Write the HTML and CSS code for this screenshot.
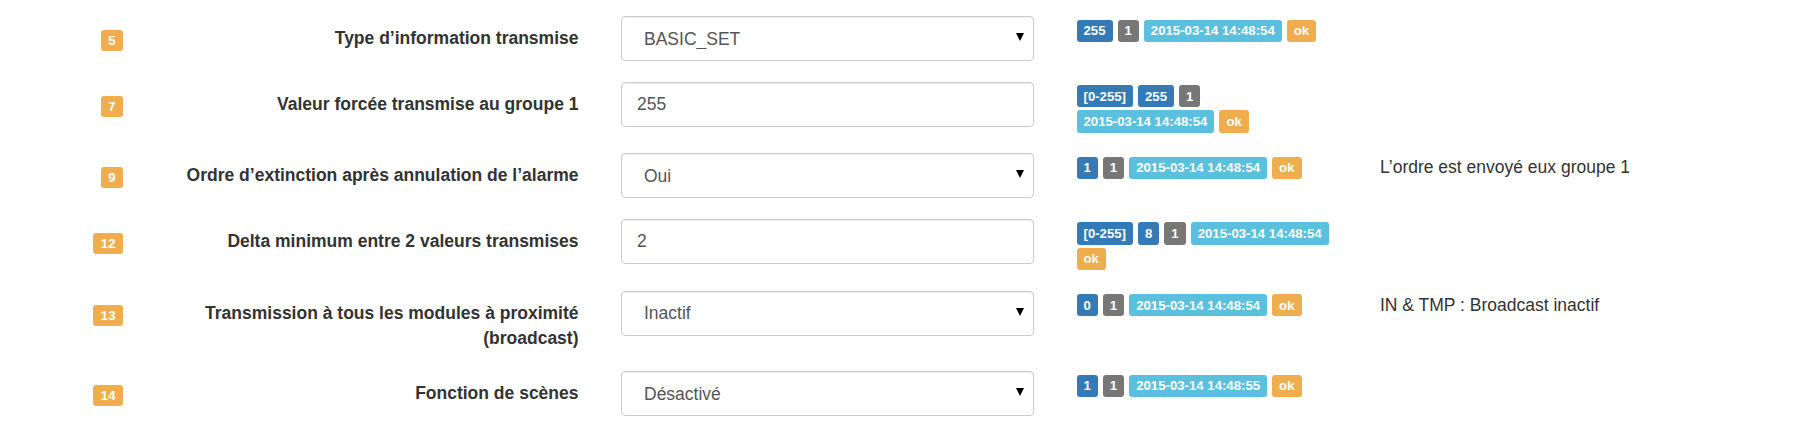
FILE: index.html
```html
<!DOCTYPE html>
<html lang="fr">
<head>
<meta charset="utf-8">
<title>Paramètres</title>
<link rel="stylesheet" href="styles.css">
</head>
<body>
<div class="form">
  <div class="row">
    <div class="num"><span class="badge warning">5</span></div>
    <div class="label">Type d’information transmise</div>
    <div class="field"><span class="select-wrap"><select class="control"><option>BASIC_SET</option></select></span></div>
    <div class="status">
      <span class="badge primary">255</span><span class="badge default">1</span><span class="badge info">2015-03-14 14:48:54</span><span class="badge warning">ok</span>
    </div>
    <div class="comment"></div>
  </div>

  <div class="row">
    <div class="num"><span class="badge warning">7</span></div>
    <div class="label">Valeur forcée transmise au groupe 1</div>
    <div class="field"><input class="control text" type="text" value="255"></div>
    <div class="status">
      <span class="badge primary">[0-255]</span><span class="badge primary">255</span><span class="badge default">1</span><span class="badge info">2015-03-14 14:48:54</span><span class="badge warning">ok</span>
    </div>
    <div class="comment"></div>
  </div>

  <div class="row">
    <div class="num"><span class="badge warning">9</span></div>
    <div class="label">Ordre d’extinction après annulation de l’alarme</div>
    <div class="field"><span class="select-wrap"><select class="control"><option>Oui</option></select></span></div>
    <div class="status">
      <span class="badge primary">1</span><span class="badge default">1</span><span class="badge info">2015-03-14 14:48:54</span><span class="badge warning">ok</span>
    </div>
    <div class="comment">L’ordre est envoyé eux groupe 1</div>
  </div>

  <div class="row">
    <div class="num"><span class="badge warning">12</span></div>
    <div class="label">Delta minimum entre 2 valeurs transmises</div>
    <div class="field"><input class="control text" type="text" value="2"></div>
    <div class="status">
      <span class="badge primary">[0-255]</span><span class="badge primary">8</span><span class="badge default">1</span><span class="badge info">2015-03-14 14:48:54</span><span class="badge warning">ok</span>
    </div>
    <div class="comment"></div>
  </div>

  <div class="row">
    <div class="num"><span class="badge warning">13</span></div>
    <div class="label">Transmission à tous les modules à proximité (broadcast)</div>
    <div class="field"><span class="select-wrap"><select class="control"><option>Inactif</option></select></span></div>
    <div class="status">
      <span class="badge primary">0</span><span class="badge default">1</span><span class="badge info">2015-03-14 14:48:54</span><span class="badge warning">ok</span>
    </div>
    <div class="comment">IN &amp; TMP : Broadcast inactif</div>
  </div>

  <div class="row">
    <div class="num"><span class="badge warning">14</span></div>
    <div class="label">Fonction de scènes</div>
    <div class="field"><span class="select-wrap"><select class="control"><option>Désactivé</option></select></span></div>
    <div class="status">
      <span class="badge primary">1</span><span class="badge default">1</span><span class="badge info">2015-03-14 14:48:55</span><span class="badge warning">ok</span>
    </div>
    <div class="comment"></div>
  </div>
</div>
</body>
</html>
```

FILE: styles.css
```css
body {
  margin: 0;
  background: #fff;
  color: #333;
  font-family: "Liberation Sans", Arial, sans-serif;
  font-size: 17.5px;
}

.form {
  padding-top: 16px;
}

.row {
  display: grid;
  grid-template-columns: 123px 455.5px 455.5px 303.5px 1fr;
  align-items: start;
  margin-bottom: 20.5px;
}

.num {
  justify-self: end;
  margin-top: 14px;
  display: flex;
}

.label {
  padding-left: 25.5px;
  padding-top: 10px;
  text-align: right;
  font-weight: bold;
  line-height: 25px;
  color: #333;
}

.field {
  padding-left: 42.5px;
}

.control {
  display: block;
  width: 100%;
  height: 45px;
  box-sizing: border-box;
  margin: 0;
  border: 1px solid #ccc;
  border-radius: 4px;
  background: #fff;
  box-shadow: inset 0 1px 1px rgba(0, 0, 0, 0.075);
  font-family: "Liberation Sans", Arial, sans-serif;
  font-size: 17.5px;
  color: #555;
  padding: 0 15px;
  outline: none;
}

select.control {
  -webkit-appearance: none;
  appearance: none;
  padding-left: 22px;
}

.select-wrap {
  position: relative;
  display: block;
}

.select-wrap::after {
  content: "";
  position: absolute;
  right: 10px;
  top: 17px;
  border-left: 4.5px solid transparent;
  border-right: 4.5px solid transparent;
  border-top: 8px solid #000;
  pointer-events: none;
}

.status {
  padding-left: 42.5px;
  padding-top: 3.5px;
  display: flex;
  flex-wrap: wrap;
  align-content: flex-start;
  gap: 3px 5px;
}

.badge {
  display: inline-block;
  font-size: 13.2px;
  font-weight: bold;
  line-height: 13px;
  padding: 4.5px 7px 4.9px;
  border-radius: 3px;
  color: #fff;
  white-space: nowrap;
}

.num .badge {
  padding: 4px 7.5px;
}

.primary { background: #337ab7; }
.default { background: #777; }
.info { background: #5bc0de; }
.warning { background: #f0ad4e; }

.comment {
  padding-left: 42.5px;
  padding-top: 2px;
  line-height: 25px;
  color: #333;
}
```
